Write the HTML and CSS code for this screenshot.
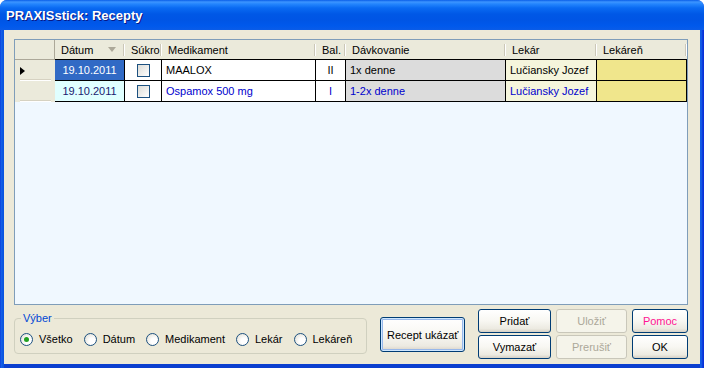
FILE: index.html
```html
<!DOCTYPE html>
<html lang="sk">
<head>
    <meta charset="UTF-8">
    <meta name="viewport" content="width=device-width, initial-scale=1.0">
    <title>PRAXISstick: Recepty</title>
    <link rel="stylesheet" href="styles.css">
</head>
<body>
    <div class="window">
        <div class="titlebar"><span class="title">PRAXISstick: Recepty</span></div>
        <div class="client">
            <div class="grid">
                <div class="hd corner"></div>
                <div class="hd sorted"><span>Dátum</span><i class="sort-glyph"></i></div>
                <div class="hd">Súkro</div>
                <div class="hd">Medikament</div>
                <div class="hd">Bal.</div>
                <div class="hd">Dávkovanie</div>
                <div class="hd">Lekár</div>
                <div class="hd">Lekáreň</div>

                <div class="rh"><i class="row-arrow"></i></div>
                <div class="cell date selected">19.10.2011</div>
                <div class="cell check"><span class="checkbox"></span></div>
                <div class="cell">MAALOX</div>
                <div class="cell center">II</div>
                <div class="cell dose">1x denne</div>
                <div class="cell doctor">Lučiansky Jozef</div>
                <div class="cell pharmacy"></div>

                <div class="rh"></div>
                <div class="cell date alt">19.10.2011</div>
                <div class="cell check"><span class="checkbox"></span></div>
                <div class="cell blue">Ospamox 500 mg</div>
                <div class="cell center blue">I</div>
                <div class="cell dose blue">1-2x denne</div>
                <div class="cell doctor blue">Lučiansky Jozef</div>
                <div class="cell pharmacy"></div>
            </div>

            <div class="footer">
                <fieldset class="group">
                    <legend>Výber</legend>
                    <div class="radios">
                        <label class="radio"><span class="dot checked"></span>Všetko</label>
                        <label class="radio"><span class="dot"></span>Dátum</label>
                        <label class="radio"><span class="dot"></span>Medikament</label>
                        <label class="radio"><span class="dot"></span>Lekár</label>
                        <label class="radio"><span class="dot"></span>Lekáreň</label>
                    </div>
                </fieldset>
                <button class="btn default show-btn">Recept ukázať</button>
                <div class="actions">
                    <button class="btn">Pridať</button>
                    <button class="btn" disabled>Uložiť</button>
                    <button class="btn help">Pomoc</button>
                    <button class="btn">Vymazať</button>
                    <button class="btn" disabled>Prerušiť</button>
                    <button class="btn">OK</button>
                </div>
            </div>
        </div>
    </div>
</body>
</html>
```

FILE: styles.css
```css
body {
    margin: 0;
    background: #fff;
    font-family: "Liberation Sans", Arial, sans-serif;
    font-size: 11px;
    color: #000;
}
.window {
    width: 704px;
    height: 368px;
    display: flex;
    flex-direction: column;
    background: linear-gradient(to right, #0831d9 0, #1662e8 1px, #0b55e0 3px, #0b55e0 700px, #1662e8 701px, #0831d9 703px);
    border-radius: 7px 7px 0 0;
    overflow: hidden;
}
.titlebar {
    height: 30px;
    flex: none;
    display: flex;
    align-items: center;
    padding: 1px 0 0 6px;
    box-sizing: border-box;
    background: linear-gradient(to bottom, #0a5ee8 0, #3d95ff 2px, #2485fd 4px, #0a6af2 8px, #0058e6 14px, #0055e5 20px, #0059ec 26px, #0a5ce8 30px);
}
.title {
    color: #fff;
    font-weight: bold;
    font-size: 13px;
    text-shadow: 1px 1px #0a1883;
}
.client {
    flex: 1;
    margin: 0 4px 4px 4px;
    background: #ece9d8;
    padding: 9px 12px 0 10px;
    box-shadow: 0 4px 0 #0a3fcf;
}

/* data grid */
.grid {
    display: grid;
    grid-template-columns: 40px 70px 37px 154px 30px 160px 91px 90px;
    grid-template-rows: 20px 21px 21px;
    align-content: start;
    height: 266px;
    box-sizing: border-box;
    border: 1px solid #7f9db9;
    background: #f0f8ff;
}
.grid > div {
    box-sizing: border-box;
    overflow: hidden;
    white-space: nowrap;
}
.hd {
    display: flex;
    align-items: center;
    padding: 0 6px;
    border-bottom: 1px solid #000;
    background:
        linear-gradient(#cbc7b8, #cbc7b8) no-repeat right 1px center / 1px 12px,
        linear-gradient(#fff, #fff) no-repeat right center / 1px 12px,
        #ebeadb;
}
.hd.corner {
    border-bottom: 1px solid #aca899;
    border-right: 1px solid #aca899;
    background: #ebeadb;
}
.hd.sorted {
    justify-content: space-between;
    padding-right: 5px;
}
.sort-glyph {
    width: 0;
    height: 0;
    margin-right: 4px;
    border-left: 4px solid transparent;
    border-right: 4px solid transparent;
    border-top: 5px solid #aca899;
}
.rh {
    display: flex;
    align-items: center;
    padding-left: 5px;
    background:
        linear-gradient(#d6d2c2, #d6d2c2) no-repeat 5px calc(100% - 1px) / 31px 1px,
        linear-gradient(#fff, #fff) no-repeat 5px 100% / 31px 1px,
        #ebeadb;
}
.row-arrow {
    width: 0;
    height: 0;
    border-left: 5px solid #000;
    border-top: 4px solid transparent;
    border-bottom: 4px solid transparent;
}
.cell {
    display: flex;
    align-items: center;
    padding: 0 4px;
    background: #fff;
    border-right: 1px solid #000;
    border-bottom: 1px solid #000;
}
.cell.date {
    justify-content: center;
}
.cell.selected {
    background: #316ac5;
    color: #fff;
}
.cell.alt {
    background: #e0ffff;
    color: #191970;
}
.cell.check,
.cell.center {
    justify-content: center;
}
.cell.dose {
    background: #dcdcdc;
}
.cell.doctor {
    background: #f5f5dc;
}
.cell.pharmacy {
    background: #f0e68c;
}
.cell.blue {
    color: #0000cd;
}
.checkbox {
    width: 13px;
    height: 13px;
    box-sizing: border-box;
    border: 1px solid #1c5180;
    background: linear-gradient(135deg, #dcdcd7, #fff);
}

/* bottom part */
.footer {
    display: flex;
    align-items: flex-start;
    margin-top: 4px;
}
.group {
    width: 355px;
    box-sizing: border-box;
    margin: 3px 0 0 0;
    padding: 0 0 7px 5px;
    border: 1px solid #d0d0bf;
    border-radius: 4px;
    min-width: 0;
}
.group legend {
    color: #0046d5;
    padding: 0 2px;
    margin-left: 1px;
    line-height: 13px;
}
.radios {
    display: flex;
    gap: 11px;
    margin-top: 8px;
}
.radio {
    display: flex;
    align-items: center;
    gap: 6px;
    line-height: 13px;
}
.dot {
    width: 13px;
    height: 13px;
    box-sizing: border-box;
    border: 1px solid #1c5180;
    border-radius: 50%;
    background: radial-gradient(circle at 65% 65%, #fff 30%, #dcd9cc 100%);
    display: flex;
    align-items: center;
    justify-content: center;
}
.dot.checked::after {
    content: "";
    width: 5px;
    height: 5px;
    border-radius: 50%;
    background: #21a121;
}
.btn {
    box-sizing: border-box;
    border: 1px solid #003c74;
    border-radius: 3px;
    padding: 0;
    font-family: "Liberation Sans", Arial, sans-serif;
    font-size: 11px;
    color: #000;
    background: linear-gradient(to bottom, #fff 0, #f8f7f2 50%, #eceae1 85%, #d6d0c5 100%);
}
.btn:disabled {
    border-color: #c9c7ba;
    color: #aca899;
    background: #f5f4ea;
}
.btn.default {
    box-shadow: inset 0 0 0 1px #cee7ff, inset 0 0 0 2px #98b8ea;
}
.btn.help {
    color: #ff1493;
}
.show-btn {
    width: 85px;
    height: 35px;
    margin: 8px 0 0 13px;
}
.actions {
    display: grid;
    grid-template-columns: 73px 71px 56px;
    grid-template-rows: 24px 24px;
    gap: 2px 5px;
    margin-left: 13px;
}
```
